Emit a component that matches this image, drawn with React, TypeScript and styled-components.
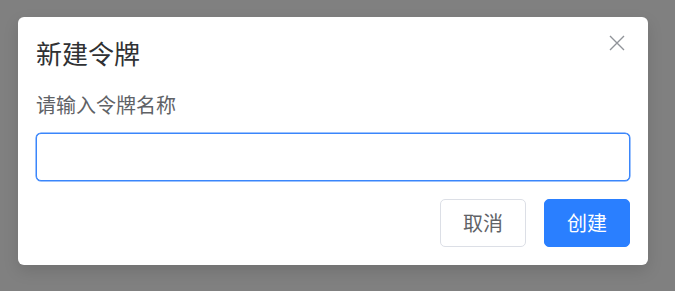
import React from "react";
import styled, { createGlobalStyle } from "styled-components";

const Global = createGlobalStyle`
  html, body { margin: 0; padding: 0; }
  body {
    background: #808080;
    font-family: "Noto Sans CJK SC", "Noto Sans", sans-serif;
    width: 675px;
    height: 291px;
    overflow: hidden;
  }
`;

const Page = styled.div`
  padding: 17px 0 0 18px;
`;

const Dialog = styled.div`
  position: relative;
  box-sizing: border-box;
  width: 630px;
  height: 248px;
  background: #fff;
  border-radius: 6px;
  padding: 20px 18px 18px 18px;
  display: flex;
  flex-direction: column;
  box-shadow: 0 6px 16px rgba(0, 0, 0, 0.12);
`;

const Title = styled.div`
  font-size: 26px;
  line-height: 32px;
  color: #303133;
`;

const Close = styled.button`
  position: absolute;
  top: 17px;
  right: 22px;
  width: 18px;
  height: 18px;
  padding: 0;
  border: none;
  background: transparent;
  display: flex;
  align-items: center;
  justify-content: center;
  cursor: pointer;
`;

const Label = styled.label`
  margin-top: 24px;
  font-size: 20px;
  line-height: 24px;
  color: #606266;
`;

const Input = styled.input`
  margin-top: 16px;
  box-sizing: border-box;
  width: 594px;
  height: 48px;
  border: 1px solid #3a86fb;
  box-shadow: 0 0 0 0.5px #3a86fb;
  border-radius: 5px;
  outline: none;
  font-family: inherit;
  font-size: 18px;
  padding: 0 12px;
`;

const Footer = styled.div`
  margin-top: 18px;
  display: flex;
  justify-content: flex-end;
  gap: 18px;
`;

const Button = styled.button<{ $primary?: boolean }>`
  box-sizing: border-box;
  width: 86px;
  height: 48px;
  border-radius: 5px;
  font-family: inherit;
  font-size: 20px;
  line-height: 24px;
  cursor: pointer;
  border: 1px solid ${(p) => (p.$primary ? "#2a7fff" : "#dcdfe6")};
  background: ${(p) => (p.$primary ? "#2a7fff" : "#ffffff")};
  color: ${(p) => (p.$primary ? "#ffffff" : "#606266")};
`;

export default function App() {
  return (
    <>
      <Global />
      <Page>
        <Dialog>
          <Title>新建令牌</Title>
          <Close aria-label="关闭">
            <svg width="16" height="16" viewBox="0 0 16 16">
              <path d="M1 1 L15 15 M15 1 L1 15" stroke="#909399" strokeWidth="1.4" fill="none" />
            </svg>
          </Close>
          <Label>请输入令牌名称</Label>
          <Input />
          <Footer>
            <Button>取消</Button>
            <Button $primary>创建</Button>
          </Footer>
        </Dialog>
      </Page>
    </>
  );
}
